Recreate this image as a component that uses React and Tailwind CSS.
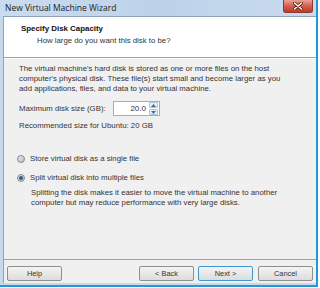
import React from "react";

function CloseButton() {
  return (
    <div className="absolute right-[3px] top-0 w-[30px] h-[13px] rounded-b-[3px] border border-t-0 border-[#8d3a30] bg-gradient-to-b from-[#e7a196] via-[#d2604f] to-[#b83b2a] flex items-center justify-center">
      <svg width="10" height="8" viewBox="0 0 10 8">
        <path d="M1.5 1 L8.5 7 M8.5 1 L1.5 7" stroke="#5a1a12" strokeWidth="3" strokeLinecap="round" />
        <path d="M1.5 1 L8.5 7 M8.5 1 L1.5 7" stroke="#ffffff" strokeWidth="1.6" strokeLinecap="round" />
      </svg>
    </div>
  );
}

function Radio({ checked }) {
  return (
    <span className="w-[8px] h-[8px] rounded-full border border-[#8a8a8a] bg-gradient-to-br from-[#e8e8e8] to-[#bdbdbd] flex items-center justify-center shrink-0">
      {checked && <span className="w-[4px] h-[4px] rounded-full bg-[#1f5fa8]" />}
    </span>
  );
}

function WizButton({ label, focus }) {
  return (
    <div
      className={`h-[15px] w-[55px] rounded-[2px] border ${
        focus ? "border-[#3c98cf]" : "border-[#8e8f8f]"
      } bg-gradient-to-b from-[#f4f4f4] to-[#dcdcdc] flex items-center justify-center text-[7.4px] text-[#333]`}
    >
      {label}
    </div>
  );
}

export default function App() {
  return (
    <div
      className="w-[320px] h-[288px] bg-white overflow-hidden"
      style={{ fontFamily: '"Liberation Sans", Arial, sans-serif' }}
    >
      <div className="w-[318px] h-[287px] border-r-2 border-b-2 border-[#1f9ad6] bg-[#c7d9ed] flex flex-col">
        {/* Title bar */}
        <div className="relative h-[16px] shrink-0 bg-gradient-to-r from-[#cadcef] via-[#bdd2ea] to-[#c9dbee]">
          <span
            className="absolute left-[5px] top-[2px] text-[8.5px] leading-[11px] text-[#1b1b1b]"
            style={{ fontFamily: '"Open Sans", "Noto Sans", sans-serif' }}
          >
            New Virtual Machine Wizard
          </span>
          <CloseButton />
        </div>

        {/* Client area */}
        <div className="flex-1 ml-[3px] mb-[2px] border-l border-t border-[#8fa1b6] flex flex-col bg-[#f0f0f0] text-[#333]">
          <div className="h-[41px] shrink-0 bg-white border-b border-[#a0a0a0] pt-[7px]">
            <div className="pl-[17px] text-[7.9px] font-bold leading-[10px] text-[#111]">
              Specify Disk Capacity
            </div>
            <div className="pl-[33px] mt-[2px] text-[7.8px] leading-[10px]">
              How large do you want this disk to be?
            </div>
          </div>

          <div className="h-[201px] shrink-0 border-t border-white pl-[15px] pt-[5px] text-[7.8px]">
            <p className="leading-[10px] whitespace-nowrap">
              The virtual machine's hard disk is stored as one or more files on the host
              <br />
              computer's physical disk. These file(s) start small and become larger as you
              <br />
              add applications, files, and data to your virtual machine.
            </p>

            <div className="mt-[7px] flex items-center h-[15px]">
              <span className="w-[94px]">Maximum disk size (GB):</span>
              <div className="w-[47px] h-[15px] border border-[#abadb3] bg-white flex items-center">
                <span className="flex-1 text-right pr-[3px] text-[8px]">20.0</span>
                <div className="w-[9px] h-[13px] flex flex-col gap-[1px] mr-[1px]">
                  <div className="flex-1 rounded-[1px] border border-[#b6c3d3] bg-[#e6eef7] flex items-center justify-center">
                    <svg width="5" height="3" viewBox="0 0 5 3">
                      <path d="M0 3 L2.5 0 L5 3 Z" fill="#3a6ea5" />
                    </svg>
                  </div>
                  <div className="flex-1 rounded-[1px] border border-[#b6c3d3] bg-[#e6eef7] flex items-center justify-center">
                    <svg width="5" height="3" viewBox="0 0 5 3">
                      <path d="M0 0 L2.5 3 L5 0 Z" fill="#3a6ea5" />
                    </svg>
                  </div>
                </div>
              </div>
            </div>

            <div className="mt-[5px] leading-[10px]">Recommended size for Ubuntu: 20 GB</div>

            <div className="mt-[23px] flex items-center gap-[5px] leading-[10px] -ml-[2px]">
              <Radio />
              <span>Store virtual disk as a single file</span>
            </div>

            <div className="mt-[9px] flex items-center gap-[5px] leading-[10px] -ml-[2px]">
              <Radio checked />
              <span>Split virtual disk into multiple files</span>
            </div>

            <p className="mt-[5px] pl-[12px] leading-[9.5px] whitespace-nowrap">
              Splitting the disk makes it easier to move the virtual machine to another
              <br />
              computer but may reduce performance with very large disks.
            </p>
          </div>

          <div className="flex-1 border-t border-[#a0a0a0] flex items-start pt-[6px] pl-[3px] pr-[3px]">
            <WizButton label="Help" />
            <div className="flex-1" />
            <WizButton label="< Back" />
            <div className="w-[4px]" />
            <WizButton label="Next >" focus />
            <div className="w-[5px]" />
            <WizButton label="Cancel" />
          </div>
        </div>
      </div>
    </div>
  );
}
